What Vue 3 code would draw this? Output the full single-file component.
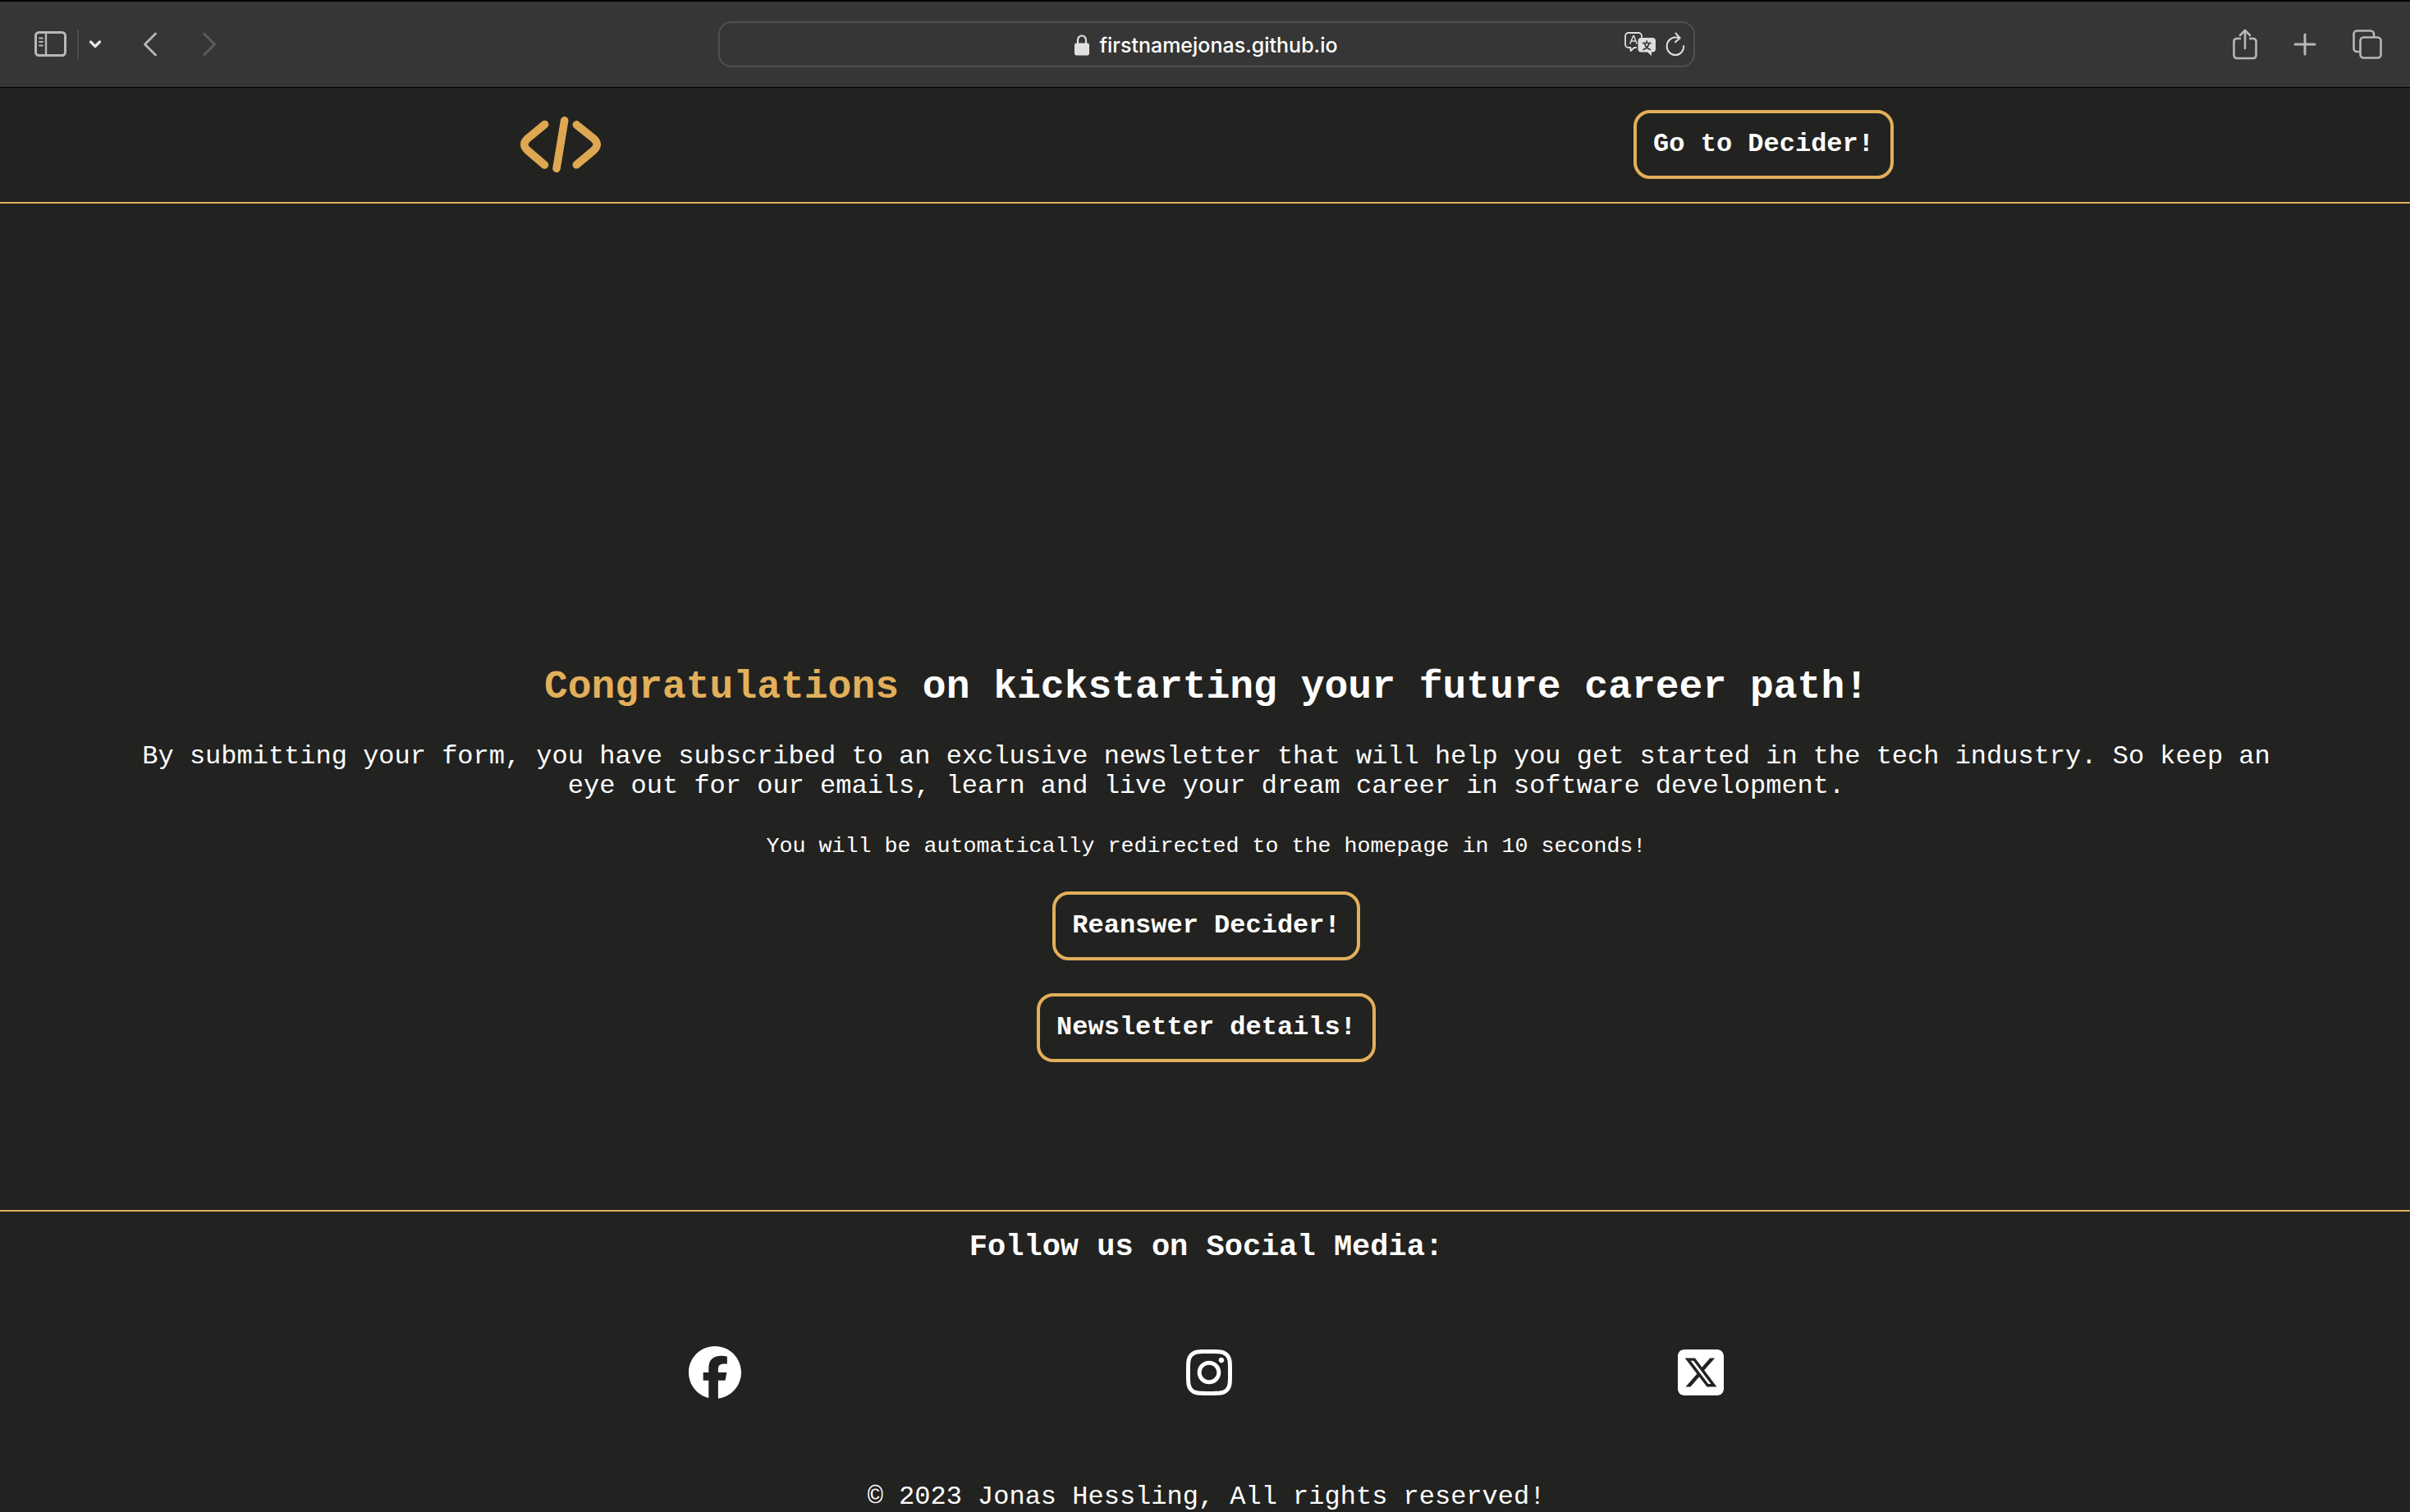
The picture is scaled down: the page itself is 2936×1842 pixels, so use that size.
<script setup>
import { ref } from 'vue'

const address = ref('firstnamejonas.github.io')
const seconds = ref(10)

const socials = [
  {
    name: 'Facebook',
    wide: true,
    box: '0 0 512 512',
    path: 'M512 256C512 114.6 397.4 0 256 0S0 114.6 0 256C0 376 82.7 476.8 194.2 504.5V334.2H141.4V256h52.8V222.3c0-87.1 39.4-127.5 125-127.5c16.2 0 44.2 3.2 55.7 6.4V172c-6-.6-16.5-1-29.6-1c-42 0-58.2 15.9-58.2 57.2V256h83.6l-14.4 78.2H287V510.1C413.8 494.8 512 386.9 512 256z',
  },
  {
    name: 'Instagram',
    wide: false,
    box: '0 0 448 512',
    path: 'M224.1 141c-63.6 0-114.9 51.3-114.9 114.9s51.3 114.9 114.9 114.9S339 319.5 339 255.9 287.7 141 224.1 141zm0 189.6c-41.1 0-74.7-33.5-74.7-74.7s33.5-74.7 74.7-74.7 74.7 33.5 74.7 74.7-33.6 74.7-74.7 74.7zm146.4-194.3c0 14.9-12 26.8-26.8 26.8-14.9 0-26.8-12-26.8-26.8s12-26.8 26.8-26.8 26.8 12 26.8 26.8zm76.1 27.2c-1.7-35.9-9.9-67.7-36.2-93.9-26.2-26.2-58-34.4-93.9-36.2-37-2.1-147.9-2.1-184.9 0-35.8 1.7-67.6 9.9-93.9 36.1s-34.4 58-36.2 93.9c-2.1 37-2.1 147.9 0 184.9 1.7 35.9 9.9 67.7 36.2 93.9s58 34.4 93.9 36.2c37 2.1 147.9 2.1 184.9 0 35.9-1.7 67.7-9.9 93.9-36.2 26.2-26.2 34.4-58 36.2-93.9 2.1-37 2.1-147.8 0-184.8zM398.8 388c-7.8 19.6-22.9 34.7-42.6 42.6-29.5 11.7-99.5 9-132.1 9s-102.7 2.6-132.1-9c-19.6-7.8-34.7-22.9-42.6-42.6-11.7-29.5-9-99.5-9-132.1s-2.6-102.7 9-132.1c7.8-19.6 22.9-34.7 42.6-42.6 29.5-11.7 99.5-9 132.1-9s102.7-2.6 132.1 9c19.6 7.8 34.7 22.9 42.6 42.6 11.7 29.5 9 99.5 9 132.1s2.7 102.7-9 132.1z',
  },
  {
    name: 'X',
    wide: false,
    box: '0 0 448 512',
    path: 'M64 32C28.7 32 0 60.7 0 96V416c0 35.3 28.7 64 64 64H384c35.3 0 64-28.7 64-64V96c0-35.3-28.7-64-64-64H64zm297.1 84L257.3 234.6 379.4 396H283.8L209 298.1 123.3 396H75.8l111-126.9L69.7 116h98l67.7 89.5L313.6 116h47.5zM323.3 367.6L153.4 142.9H125.1L296.9 367.6h26.3z',
  },
]
</script>

<template>
  <div class="window">
    <div class="toolbar">
      <div class="tools">
        <button type="button" class="tool sidebar" aria-label="Show sidebar">
          <svg width="40" height="32" viewBox="0 0 40 32" fill="none" stroke="#b7b7b7" stroke-linecap="round">
            <rect x="1.5" y="1.5" width="36" height="28" rx="4" stroke-width="3" />
            <path d="M14 2v27" stroke-width="2.4" />
            <path d="M6 8.5h4M6 13h4M6 17.5h4" stroke-width="1.8" />
          </svg>
        </button>
        <span class="divider"></span>
        <button type="button" class="tool chevron" aria-label="Tab groups">
          <svg width="16" height="12" viewBox="0 0 16 12" fill="none" stroke="#e6e6e6" stroke-width="3.2" stroke-linecap="round" stroke-linejoin="round">
            <path d="M2.5 3L8 8.5 13.5 3" />
          </svg>
        </button>
        <button type="button" class="tool back" aria-label="Back">
          <svg width="18" height="30" viewBox="0 0 18 30" fill="none" stroke="#b7b7b7" stroke-width="2.8" stroke-linecap="round" stroke-linejoin="round">
            <path d="M15.5 2L2.5 15l13 13" />
          </svg>
        </button>
        <button type="button" class="tool forward" aria-label="Forward">
          <svg width="18" height="30" viewBox="0 0 18 30" fill="none" stroke="#5c5c5c" stroke-width="2.8" stroke-linecap="round" stroke-linejoin="round">
            <path d="M2.5 2l13 13-13 13" />
          </svg>
        </button>
      </div>

      <div class="address">
        <label class="site">
          <svg width="18" height="26" viewBox="0 0 18 26" aria-label="Secure" role="img">
            <path d="M4 12V7a5 5.5 0 0 1 10 0v5" fill="none" stroke="#e0e0e0" stroke-width="2.2" />
            <rect x="0" y="10.5" width="18" height="15" rx="2.5" fill="#e0e0e0" />
          </svg>
          <input v-model="address" class="url" type="text" aria-label="Address" spellcheck="false" />
        </label>
        <div class="actions">
          <button type="button" class="tool" aria-label="Translate">
            <svg width="38" height="30" viewBox="0 0 38 30" fill="none" stroke-linejoin="round" stroke-linecap="round">
              <path d="M14 19h-2l-4.500 4v-4H5a4 4 0 0 1-4-4V5a4 4 0 0 1 4-4h12a4 4 0 0 1 4 4v1" stroke="#dedede" stroke-width="1.8" />
              <path d="M7 14L10.800 4.500h.6L15 14M8.200 11h5.600" stroke="#dedede" stroke-width="1.5" />
              <path d="M20.500 7H34a4 4 0 0 1 4 4v9.500a4 4 0 0 1-4 4h-1V29l-5-4.500h-7.500a4 4 0 0 1-4-4V11a4 4 0 0 1 4-4z" fill="#dedede" />
              <path d="M22.500 13.500h9.500M27.200 11v2.500M30 14c-1 3.500-4 6.500-7 7.500M24.500 14c1 3.500 4 6.500 7 7.500" stroke="#363636" stroke-width="1.7" />
            </svg>
          </button>
          <button type="button" class="tool" aria-label="Reload">
            <svg width="24" height="30" viewBox="0 0 24 30" fill="none" stroke="#dedede" stroke-width="2" stroke-linecap="round" stroke-linejoin="round">
              <path d="M22.300 17a10.300 10.800 0 1 1-10.300-10.500c2 0 3.500 0 5.500.8" />
              <path d="M12.500 1.500l5 5.800-5.500 5" />
            </svg>
          </button>
        </div>
      </div>

      <div class="tools end">
        <button type="button" class="tool" aria-label="Share">
          <svg width="30" height="38" viewBox="0 0 30 38" fill="none" stroke="#b7b7b7" stroke-width="2.6" stroke-linecap="round" stroke-linejoin="round">
            <path d="M10 12H5a3.500 3.500 0 0 0-3.500 3.500v17A3.500 3.500 0 0 0 5 36h20a3.500 3.500 0 0 0 3.500-3.500v-17A3.500 3.500 0 0 0 25 12h-5" stroke-linecap="butt" />
            <path d="M15 24V2M9 8l6-6 6 6" />
          </svg>
        </button>
        <button type="button" class="tool" aria-label="New tab">
          <svg width="28" height="28" viewBox="0 0 28 28" fill="none" stroke="#b7b7b7" stroke-width="3" stroke-linecap="round">
            <path d="M14 2v24M2 14h24" />
          </svg>
        </button>
        <button type="button" class="tool" aria-label="Tab overview">
          <svg width="36" height="36" viewBox="0 0 36 36" fill="none" stroke="#b7b7b7" stroke-width="2.6">
            <rect x="9.5" y="9.5" width="25" height="25" rx="4" />
            <path d="M9 27H5.500a4 4 0 0 1-4-4V5.500a4 4 0 0 1 4-4H22a4 4 0 0 1 4 4V9" />
          </svg>
        </button>
      </div>
    </div>

    <header class="header">
      <a href="#" class="logo" aria-label="Home">
        <svg width="100" height="72" viewBox="0 0 100 72" fill="none" stroke="#dea752" stroke-width="9.6" stroke-linecap="round" stroke-linejoin="round">
          <path d="M31.700 11.500L10.500 29q-7.500 7 0 14l21 18" />
          <path d="M55.700 6.800L46 65.300" />
          <path d="M70.300 11.900L91.500 29q7.500 7 0 14L70.300 60.800" />
        </svg>
      </a>
      <a href="#" class="pill">Go to Decider!</a>
    </header>

    <main class="main">
      <h1 class="title"><span class="accent">Congratulations</span> on kickstarting your future career path!</h1>
      <p class="text">
        By submitting your form, you have subscribed to an exclusive newsletter that will help you get
        started in the tech industry. So keep an eye out for our emails, learn and live your dream
        career in software development.
      </p>
      <small class="note">You will be automatically redirected to the homepage in {{ seconds }} seconds!</small>
      <a href="#" class="pill">Reanswer Decider!</a>
      <a href="#" class="pill">Newsletter details!</a>
    </main>

    <footer class="footer">
      <h3 class="follow">Follow us on Social Media:</h3>
      <ul class="socials">
        <li v-for="item in socials" :key="item.name">
          <a href="#" :aria-label="item.name">
            <svg class="social" :class="{ wide: item.wide }" :viewBox="item.box" fill="#fff">
              <path :d="item.path" />
            </svg>
          </a>
        </li>
      </ul>
      <p class="copyright">© 2023 Jonas Hessling, All rights reserved!</p>
    </footer>
  </div>
</template>

<style>
body {
  margin: 0;
  background: #222220;
}
</style>

<style scoped>
.window {
  display: flex;
  flex-direction: column;
  box-sizing: border-box;
  min-height: 100vh;
  background: #222220;
  color: #fff;
  font-family: "Courier New", "Liberation Mono", monospace;
  font-size: 32px;
  line-height: 36px;
}

.toolbar,
.header,
.main,
.footer {
  border-left: 3px solid transparent;
}

.toolbar {
  display: grid;
  grid-template-columns: 1fr minmax(0, 1190px) 1fr;
  align-items: center;
  box-sizing: border-box;
  height: 107px;
  padding-left: 3px;
  border-top: 2px solid #000;
  border-bottom: 1px solid #000;
  border-left: 0;
  background: #363636;
}

.tools {
  display: flex;
  align-items: center;
  padding-left: 39px;
}

.tools.end {
  justify-content: flex-end;
  gap: 44px;
  padding: 0 34px 0 0;
}

.tool {
  display: flex;
  padding: 0;
  border: 0;
  background: none;
}

.divider {
  width: 2px;
  height: 36px;
  margin: 0 12px;
  background: #4a4a4a;
}

.back {
  margin-left: 50px;
}

.forward {
  margin-left: 54px;
}

.address {
  display: grid;
  grid-template-columns: 1fr auto 1fr;
  align-items: center;
  box-sizing: border-box;
  height: 56px;
  border: 2px solid #4f4f4f;
  border-radius: 16px;
}

.site {
  display: flex;
  grid-column: 2;
  align-items: center;
  gap: 12px;
  padding-top: 2px;
}

.url {
  field-sizing: content;
  padding: 0;
  border: 0;
  outline: 0;
  background: none;
  color: #fff;
  font: 500 25px/32px Inter, "Liberation Sans", sans-serif;
}

.actions {
  display: flex;
  justify-content: flex-end;
  gap: 12px;
  padding-right: 10px;
}

.header {
  display: flex;
  align-items: center;
  justify-content: space-around;
  padding: 27px 0 28px;
}

.header,
.main {
  border-bottom: 2px solid #e2af5b;
  border-left: 0;
}

.header {
  padding-left: 3px;
}

.logo {
  display: flex;
}

.pill {
  padding: 20px;
  border: 4px solid #e2af5b;
  border-radius: 20px;
  color: #fff;
  font-weight: 700;
  text-decoration: none;
}

.main {
  display: flex;
  flex: 1;
  flex-direction: column;
  align-items: center;
  justify-content: flex-end;
  gap: 40px;
  padding: 40px 144px 180px 147px;
  text-align: center;
}

.title {
  margin: 0;
  font-size: 48px;
  line-height: 54px;
}

.accent {
  color: #e2af5b;
}

.text,
.copyright {
  margin: 0;
}

.note {
  line-height: 30px;
}

.footer {
  padding-top: 22px;
  text-align: center;
}

.follow {
  margin: 0;
  font-size: 37px;
  line-height: 42px;
}

.socials {
  display: flex;
  justify-content: space-evenly;
  margin: 0;
  padding: 100px 10% 102px;
  list-style: none;
}

.social {
  display: block;
  width: 56px;
  height: 64px;
}

.social.wide {
  width: 64px;
}
</style>
